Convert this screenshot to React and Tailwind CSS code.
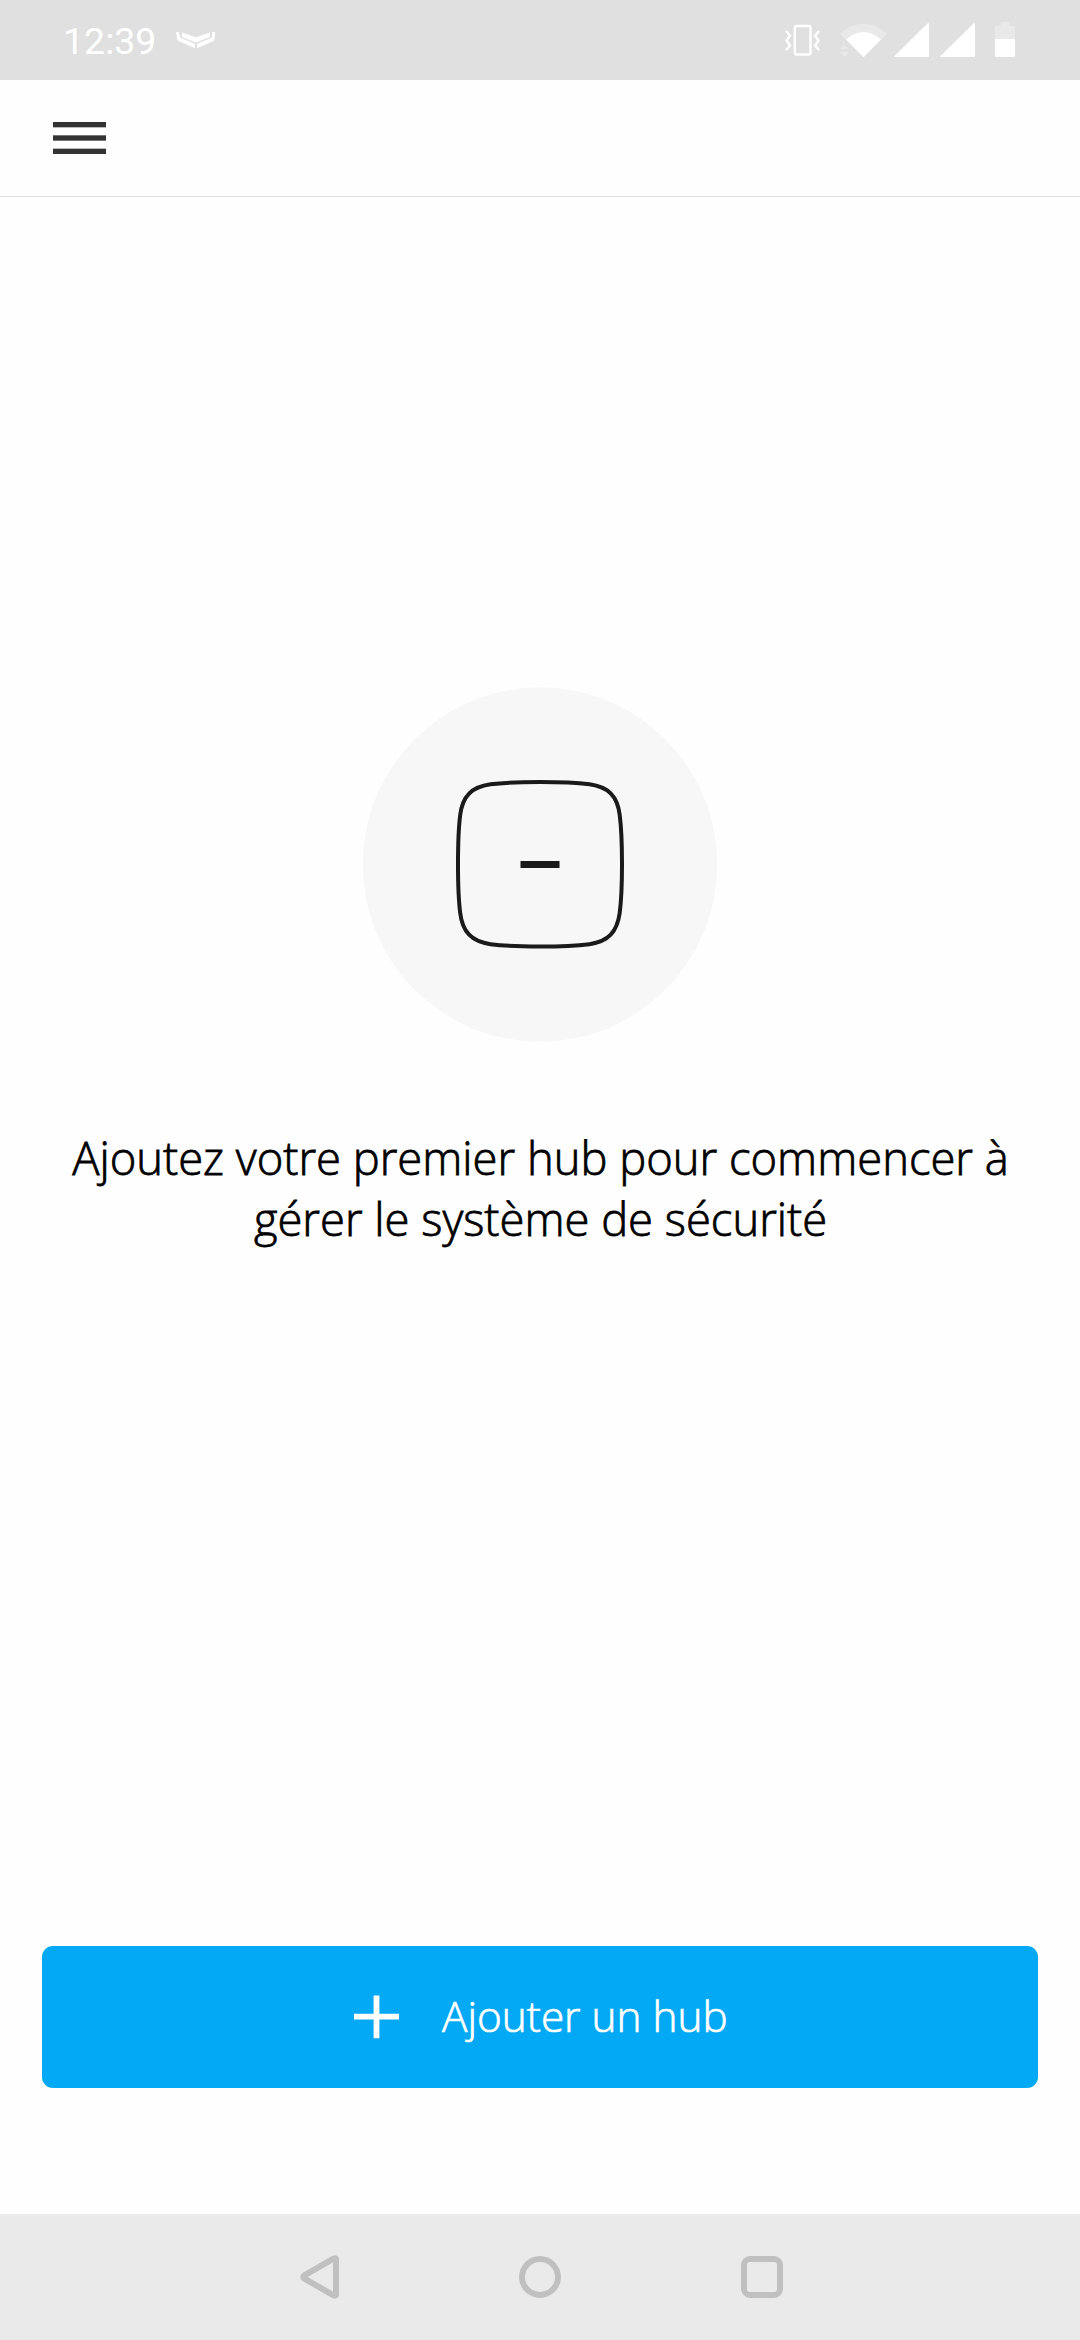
function StatusBar() {
  return (
    <header className="flex h-20 shrink-0 items-start bg-[#e0e0e0] text-white">
      <span className="ml-[63px] mt-[19px] w-[113px] font-['Roboto'] text-[37.5px] leading-[44px]">12:39</span>
      <svg className="mt-[31px] h-[18px] w-10 shrink-0" viewBox="176 31 40 18" fill="currentColor">
        <path d="M182 32.500L195.700 37.200L210 32.500V37L195.700 42.500L182 37Z" />
        <path d="M176 32L179 32L180 37.500L195 44V48.200L177.500 40.500Z" />
        <path d="M215 32L212 32V37.500L197 44V48.200L214.500 40.500Z" />
      </svg>
      <svg className="ml-auto mr-[60px] h-20 w-60 shrink-0" viewBox="780 0 240 80" fill="currentColor">
        <rect x="794.800" y="26" width="15.700" height="28.500" rx="1.800" fill="none" stroke="currentColor" strokeWidth="2.400" />
        <g fill="none" stroke="currentColor" strokeWidth="2.400">
          <path d="M786 31L790 35.500L786.500 40.500L790 45.500L786 50" />
          <path d="M819 31L815 35.500L818.500 40.500L815 45.500L819 50" />
        </g>
        <path d="M840 33.500Q863.500 14 887 33.500L863.500 57Z" opacity=".3" />
        <path d="M846 39.500Q863.500 24.500 881 39.500L863.500 57.300Z" />
        <path d="M840 49L844.500 44.500L849 49ZM840 52L844.500 56.500L849 52Z" opacity=".3" />
        <path d="M927.500 23.500Q929 22.500 929 24.500V56Q929 57 928 57H895Q893.500 57 894.500 56Z" />
        <path d="M973.500 23.500Q975 22.500 975 24.500V56Q975 57 974 57H941Q939.500 57 940.500 56Z" />
        <path d="M1000.500 22H1009.500V26H1014Q1015 26 1015 27V39H995V27Q995 26 996 26H1000.500Z" opacity=".3" />
        <path d="M995 39H1015V55.500Q1015 57 1013.500 57H996.500Q995 57 995 55.500Z" />
      </svg>
    </header>
  );
}

function Toolbar() {
  return (
    <div className="flex h-[117px] shrink-0 items-start border-b border-[#e0e0e0] pl-[53px] pt-[42px]">
      <button aria-label="Menu">
        <svg className="block h-8 w-[53px]" viewBox="0 0 53 32" fill="#333333">
          <rect width="53" height="5.330" />
          <rect y="13.330" width="53" height="5.330" />
          <rect y="26.670" width="53" height="5.330" />
        </svg>
      </button>
    </div>
  );
}

function EmptyState() {
  return (
    <main className="flex flex-1 flex-col items-center pt-[490px]">
      <svg className="h-[355px] w-[355px] -translate-x-[0.5px]" viewBox="362 687 355 355">
        <circle cx="539.500" cy="864.500" r="177.200" fill="#f7f7f7" />
        <path
          d="M539.500 782C568 782 581 783.300 589 784.300C608 787 617 796 619.200 815C620.500 825 621.500 840 621.500 864.300C621.500 889 620.500 903 619.200 913C616.500 932 608 941.500 589 944.200C581 945.200 568 946.500 539.500 946.500C511 946.500 498 945.200 490 944.200C471 941.500 462 932 459.700 913C458.400 903 457.500 889 457.500 864.300C457.500 840 458.400 825 459.700 815C462 796 471 787 490 784.300C498 783.300 511 782 539.500 782Z"
          fill="none"
          stroke="#1a1a1a"
          strokeWidth="4"
        />
        <rect x="520" y="861" width="39" height="7" fill="#1a1a1a" />
      </svg>
      <p className="mt-[85px] translate-x-[0.5px] whitespace-nowrap text-center font-['Open_Sans'] text-[45.35px] font-light leading-[61px] text-black [-webkit-text-stroke:0.8px_black]">
        Ajoutez votre premier hub pour commencer à
        <br />
        gérer le système de sécurité
      </p>
    </main>
  );
}

function AddHubButton() {
  return (
    <button className="mx-[42px] mb-[126px] flex h-[142px] shrink-0 items-center rounded-[11px] bg-[#03a9f5] pl-[312px] text-white">
      <svg className="h-[45px] w-[45px]" viewBox="0 0 45 45" fill="none" stroke="currentColor" strokeWidth="5.800">
        <path d="M0 21.700H45M22.500 0.500V43.300" />
      </svg>
      <span className="-mt-[2px] ml-[43px] whitespace-nowrap font-['Open_Sans'] text-[42.3px] font-light [-webkit-text-stroke:0.7px_white]">Ajouter un hub</span>
    </button>
  );
}

function NavigationBar() {
  return (
    <nav className="flex h-[126px] shrink-0 items-center justify-center gap-[180px] bg-[#eaeaea] text-[#c0c0c0]">
      <svg className="h-[42px] w-[42px] overflow-visible" viewBox="0 0 42 42" fill="none" stroke="currentColor" strokeWidth="6" strokeLinejoin="round">
        <path d="M39 2.800Q38 2 36.500 2.700L7 19.700Q5.500 21 7 22.300L36.500 39.300Q38 40 39 39.200Z" />
      </svg>
      <svg className="h-[42px] w-[42px]" viewBox="0 0 42 42" fill="none" stroke="currentColor" strokeWidth="6">
        <circle cx="21" cy="21" r="18" />
      </svg>
      <svg className="h-[42px] w-[42px]" viewBox="0 0 42 42" fill="none" stroke="currentColor" strokeWidth="6">
        <rect x="3" y="3" width="36" height="36" rx="6" />
      </svg>
    </nav>
  );
}

export default function App() {
  return (
    <div className="flex h-[2340px] w-[1080px] flex-col overflow-hidden bg-[#fefefe]">
      <StatusBar />
      <Toolbar />
      <EmptyState />
      <AddHubButton />
      <NavigationBar />
    </div>
  );
}
